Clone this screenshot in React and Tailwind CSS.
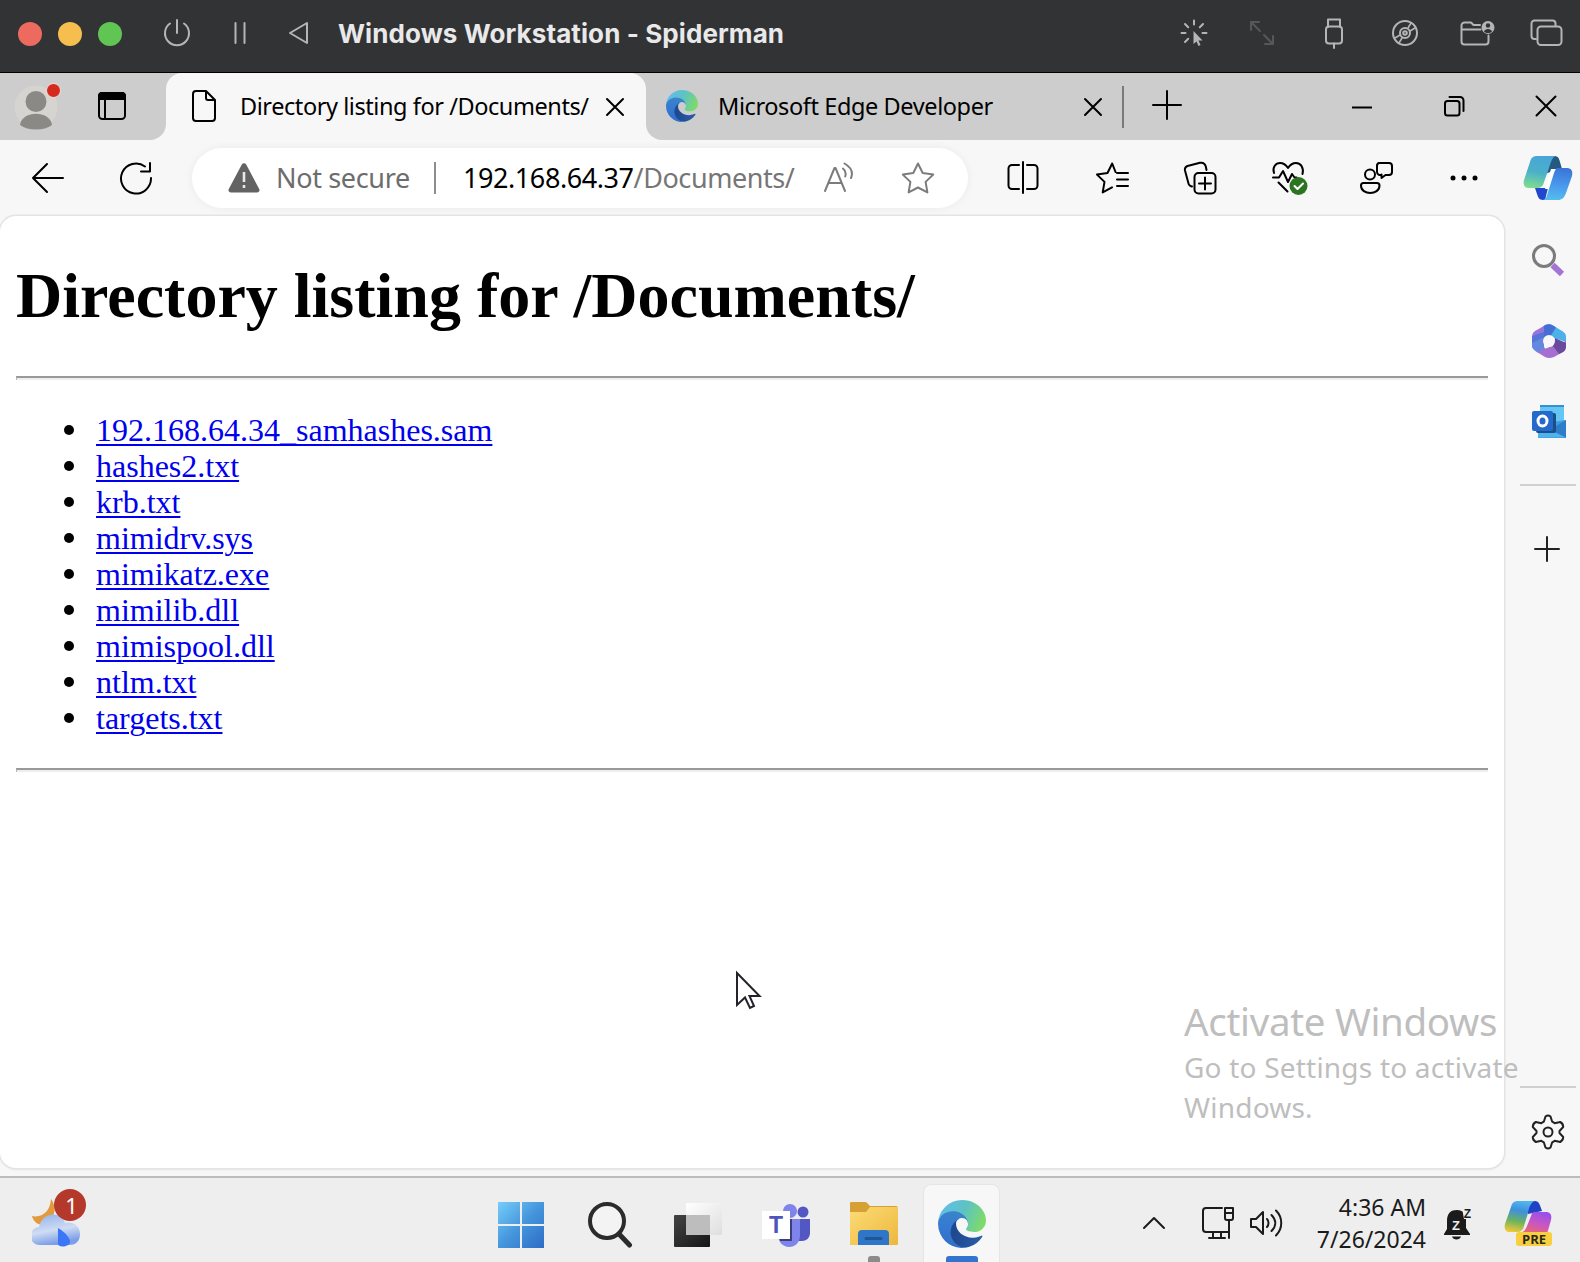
import React from "react";

function Svg({ w, h, className = "", children, sw = 2 }) {
  return (
    <svg
      width={w}
      height={h}
      viewBox={`0 0 ${w} ${h}`}
      fill="none"
      stroke="currentColor"
      strokeWidth={sw}
      strokeLinecap="round"
      strokeLinejoin="round"
      className={`shrink-0 ${className}`}
    >
      {children}
    </svg>
  );
}

function EdgeLogo({ size, id, className = "" }) {
  return (
    <svg width={size} height={size} viewBox="4.63 4.92 256 256" className={`shrink-0 ${className}`}>
      <defs>
        <linearGradient id={`${id}a`} x1="0.2" y1="0.5" x2="1" y2="0.6">
          <stop offset="0" stopColor="#1f4a91" />
          <stop offset="1" stopColor="#2b5ba8" />
        </linearGradient>
        <linearGradient id={`${id}b`} x1="0.5" y1="0" x2="0.4" y2="1">
          <stop offset="0" stopColor="#3a86c8" />
          <stop offset="0.5" stopColor="#3679d2" />
          <stop offset="1" stopColor="#2f6fc6" />
        </linearGradient>
        <linearGradient id={`${id}c`} x1="0" y1="0.3" x2="1" y2="0.6">
          <stop offset="0" stopColor="#62bdee" />
          <stop offset="0.5" stopColor="#5dc2c4" />
          <stop offset="1" stopColor="#7fdc66" />
        </linearGradient>
      </defs>
      <path fill={`url(#${id}a)`} d="M235.68 195.17a93.73 93.73 0 0 1-10.54 4.71 101.87 101.87 0 0 1-35.9 6.46c-47.32 0-88.54-32.55-88.54-74.32A31.48 31.48 0 0 1 117.13 104.57c-42.8 1.8-53.8 46.4-53.8 72.53 0 73.88 68.09 81.37 82.76 81.37 7.91 0 19.84-2.3 27-4.56l1.31-.44a128.34 128.34 0 0 0 66.6-52.8 4 4 0 0 0-5.32-5.5Z" />
      <path fill={`url(#${id}b)`} d="M110.34 246.34A79.2 79.2 0 0 1 87.6 225 80.72 80.72 0 0 1 117.13 104.57c3.12-1.47 8.45-4.13 15.54-4A32.35 32.35 0 0 1 158.35 113.57a31.88 31.88 0 0 1 6.36 18.66c0-.21 24.46-79.6-80-79.6-43.9 0-80 41.66-80 78.21a130.15 130.15 0 0 0 12.11 56 128 128 0 0 0 156.38 67.11 75.55 75.55 0 0 1-62.78-8Z" />
      <path fill={`url(#${id}c)`} d="M156.94 153.78c-.81 1.05-3.3 2.5-3.3 5.66 0 2.61 1.7 5.12 4.72 7.23 14.38 10 41.49 8.68 41.56 8.68A59.56 59.56 0 0 0 230.19 167a61.38 61.38 0 0 0 30.43-52.88c.26-22.41-8-37.31-11.34-43.91C228.09 28.76 182.35 4.92 132.61 4.92a128 128 0 0 0-128 126.2c.48-36.54 36.8-66.05 80-66.05 3.5 0 23.46.34 42 10.07 16.34 8.58 24.9 18.94 30.85 29.21 6.18 10.67 7.28 24.15 7.28 29.52S162 147.2 156.94 153.78Z" />
    </svg>
  );
}

function TitleBar() {
  return (
    <header className="flex h-[73px] shrink-0 items-center border-b border-black bg-[#323335] pb-[5px] pl-[18px] pr-[17px] text-[#b5b5b6]">
      <div className="flex gap-4">
        <div className="size-6 rounded-full bg-[#ed6a5f]" />
        <div className="size-6 rounded-full bg-[#f5be4f]" />
        <div className="size-6 rounded-full bg-[#61c554]" />
      </div>
      <Svg w={28} h={28} className="mb-[2px] ml-[41px]">
        <path d="M14 1v13M7 4.500a12 12 0 1 0 14 0" />
      </Svg>
      <Svg w={12} h={22} className="mb-[2px] ml-[43px]">
        <path d="M1.500 1v20M10.500 1v20" />
      </Svg>
      <Svg w={21} h={24} className="mb-px ml-[42px]">
        <path d="M19 2v20L2 12Z" />
      </Svg>
      <h1 className="ml-[29px] whitespace-nowrap font-['Inter'] text-[26px] font-bold leading-8 tracking-[0.09px] text-[#e9e9ea]">
        Windows Workstation - Spiderman
      </h1>
      <div className="mb-[2px] ml-auto flex items-center">
        <Svg w={28} h={28}>
          <path d="M14 1.500v4M5 5l3.200 3.200M23 5l-3.200 3.200M1.500 14h4M26.500 14h-4M5 23l3.200-3.200" />
          <path d="M13.500 12v13l3-2.600 2 4.600 2-1-2-4.400h4Z" fill="currentColor" stroke="none" />
        </Svg>
        <Svg w={26} h={26} className="ml-[41px] text-[#565759]">
          <path d="M2 10V2h8M2 2l9 9M15 15l9 9M16 24h8v-8" />
        </Svg>
        <Svg w={20} h={31} className="ml-[49px] mt-[2px]">
          <path d="M4 9V1.500h12V9M10 25.500V30" />
          <rect x="2" y="8.500" width="16" height="17" rx="3" />
        </Svg>
        <Svg w={28} h={28} className="ml-[47px]">
          <circle cx="14" cy="14" r="12" />
          <circle cx="14" cy="14" r="5" />
          <circle cx="14" cy="14" r="1.800" />
          <path d="M17 9l3-5M19 12l5-3M11 19l-3 5M9 16l-5 3" strokeWidth="1.600" />
        </Svg>
        <Svg w={35} h={26} className="ml-[41px]">
          <path d="M20 5h-6.500l-2.500-2.500H4.500A3 3 0 0 0 1.500 5.500v16a3 3 0 0 0 3 3h21a3 3 0 0 0 3-3V15.500M1.500 9.500h19" />
          <circle cx="28" cy="7.500" r="6.500" fill="currentColor" stroke="none" />
          <circle cx="28" cy="5.500" r="2.200" fill="#323335" stroke="none" />
          <path d="M24 11.500c1-3.500 7-3.500 8 0-2 2-6 2-8 0Z" fill="#323335" stroke="none" />
        </Svg>
        <Svg w={33} h={28} className="ml-[35px]">
          <path d="M6 20H4.500a3 3 0 0 1-3-3V4.500a3 3 0 0 1 3-3h18a3 3 0 0 1 3 3V7" />
          <rect x="7.500" y="7.500" width="24" height="18.500" rx="3.500" />
        </Svg>
      </div>
    </header>
  );
}

function TabStrip() {
  return (
    <div className="flex h-[67px] shrink-0 bg-[#f7f7f7] font-['Noto_Sans'] text-[23.5px] text-black">
      <div className="flex w-[166px] items-center rounded-br-[16px] bg-[#cdcdcd] pl-[14px]">
        <div className="relative size-[44px]">
          <svg width="44" height="46" viewBox="0 0 44 46">
            <circle cx="22" cy="22" r="21.500" fill="#d6d4d0" />
            <circle cx="22" cy="16.500" r="10.500" fill="#8b8986" />
            <path d="M6 40c2-15 30-15 32 0-8 6-24 6-32 0Z" fill="#8b8986" />
          </svg>
          <div className="absolute left-[32px] top-[-2px] size-[15px] rounded-full border-[1.5px] border-[#efe6e4] bg-[#d42a20]" />
        </div>
        <Svg w={30} h={30} className="mb-px ml-[39px]">
          <rect x="2" y="2" width="26" height="26" rx="3.500" />
          <path d="M2 8V5a3 3 0 0 1 3-3h20a3 3 0 0 1 3 3v3Z" fill="currentColor" />
          <path d="M8 8v20" />
        </Svg>
      </div>
      <div className="w-[480px] bg-[#cdcdcd]">
        <div className="flex h-full items-center rounded-t-[16px] bg-[#f7f7f7] pl-[25px]">
          <Svg w={26} h={34} className="mb-px">
            <path d="M5 2h10l9 9v18a3 3 0 0 1-3 3H5a3 3 0 0 1-3-3V5a3 3 0 0 1 3-3ZM15 2v7a2 2 0 0 0 2 2h7" />
          </Svg>
          <span className="mb-[2px] ml-[23px] w-[350px] whitespace-nowrap leading-8 tracking-[-0.43px]">
            Directory listing for /Documents/
          </span>
          <Svg w={20} h={20} className="ml-[15px]">
            <path d="M2 2l16 16M18 2L2 18" />
          </Svg>
        </div>
      </div>
      <div className="flex grow items-center rounded-bl-[16px] bg-[#cdcdcd] pl-[20px]">
        <EdgeLogo size={32} id="tab" className="mb-px" />
        <span className="mb-[2px] ml-[20px] w-[275px] whitespace-nowrap leading-8 tracking-[-0.4px]">
          Microsoft Edge Developer
        </span>
        <Svg w={20} h={20} className="ml-[90px]">
          <path d="M2 2l16 16M18 2L2 18" />
        </Svg>
        <div className="ml-[19px] h-[42px] w-[2px] bg-[#7a7a7a]" />
        <Svg w={30} h={30} className="mb-[3px] ml-[28px]">
          <path d="M15 1v28M1 15h28" />
        </Svg>
        <Svg w={20} h={20} className="ml-[170px]">
          <path d="M0 10.500h20" strokeLinecap="butt" />
        </Svg>
        <Svg w={22} h={22} className="mb-[2px] ml-[71px]">
          <rect x="2" y="6" width="14.500" height="14.500" rx="2.500" />
          <path d="M6.500 2H17a3.500 3.500 0 0 1 3.500 3.500V16" />
        </Svg>
        <Svg w={22} h={22} className="mb-[2px] ml-[70px]">
          <path d="M1.500 1.500l19 19M20.500 1.500l-19 19" />
        </Svg>
      </div>
    </div>
  );
}

function Toolbar() {
  return (
    <div className="flex h-[76px] shrink-0 items-center bg-[#f7f7f7] pl-[31px] text-black">
      <Svg w={34} h={32}>
        <path d="M2 16h30M16 2L2 16l14 14" />
      </Svg>
      <Svg w={34} h={34} className="ml-[54px]">
        <path d="M26 5.500A15 15 0 1 0 32 17M31 2v8.500h-9" />
      </Svg>
      <div className="ml-[39px] flex h-[60px] w-[776px] items-center rounded-full bg-white pl-[36px] font-['Noto_Sans'] text-[27px] shadow-[0_0_8px_rgba(0,0,0,0.06)]">
        <svg width="32" height="32" viewBox="0 0 32 32" className="shrink-0">
          <path d="M13.800 2.500a2.500 2.500 0 0 1 4.400 0l13 24.500a2.300 2.300 0 0 1-2 3.500H2.800a2.300 2.300 0 0 1-2-3.500Z" fill="#636363" />
          <path d="M14.700 10h2.600v10h-2.600ZM14.700 23h2.600v3h-2.600Z" fill="#e8e8e8" />
        </svg>
        <span className="ml-[16px] w-[135px] whitespace-nowrap leading-8 tracking-[-0.35px] text-[#6d6d6d]">Not secure</span>
        <div className="ml-[23px] h-[32px] w-[2px] bg-[#8d8d8d]" />
        <span className="ml-[27px] w-[332px] whitespace-nowrap leading-8 tracking-[-0.43px] text-[#767676]">
          <span className="text-black">192.168.64.37</span>/Documents/
        </span>
        <Svg w={32} h={32} className="ml-[28px] text-[#7c7c7c]">
          <path d="M2 29L11.500 6h1L22 29M5.500 21h13" />
          <path d="M20 6.500c2.500 2 3.200 5 2.200 8M21.500 1.500c6 3.500 9 8.500 6.500 14.500" />
        </Svg>
        <Svg w={34} h={34} className="ml-[46px] text-[#7c7c7c]">
          <path d="M17 2.500l4.700 9.500 10.500 1.600-7.600 7.300 1.800 10.500L17 26.500l-9.400 4.900 1.800-10.500L1.800 13.600 12.300 12Z" />
        </Svg>
      </div>
      <Svg w={32} h={34} className="ml-[39px]">
        <path d="M12 4H5a3.500 3.500 0 0 0-3.500 3.500v17A3.500 3.500 0 0 0 5 28h7M20 4h7a3.500 3.500 0 0 1 3.500 3.500v17A3.500 3.500 0 0 1 27 28h-7M16 1v31" />
      </Svg>
      <Svg w={34} h={34} className="ml-[56px]">
        <path d="M20.500 11L17.200 2.500 12.500 12 2 13.600l7.500 7.300-1.800 10.500 9.300-5M22 12h11M22 18.500h11M22 25h11" />
      </Svg>
      <Svg w={34} h={34} className="ml-[54px]">
        <path d="M9 25.500l-1.500-.5a4 4 0 0 1-2.200-3.200L2 9.500A4 4 0 0 1 4.500 5L17 1.800c3-.6 5 1 5.800 3.700L23.500 9" />
        <rect x="11.500" y="12" width="21" height="20.500" rx="4" />
        <path d="M22 16.500v12M16 22.500h12" />
      </Svg>
      <Svg w={38} h={36} className="ml-[54px]">
        <path d="M3 13C1 7 5 3 9 3c4 0 6 2 8 5 2-3 4-5 8-5 5 0 8 5 6.500 11M2 17.500h6l4-6.500 5 11 4-8 2.500 3.500h2M7.500 22.500l9 9" />
        <circle cx="27.500" cy="26" r="9" fill="#2c7421" stroke="none" />
        <path d="M23.500 26l3 3 5.500-5.500" stroke="#fff" />
      </Svg>
      <Svg w={34} h={34} className="ml-[50px]">
        <circle cx="11" cy="13.500" r="5" />
        <path d="M4 22h14a2.500 2.500 0 0 1 2.500 2.500c0 10-18.500 10-18.500 0A2.500 2.500 0 0 1 4 22ZM20 2h10a3 3 0 0 1 3 3v6a3 3 0 0 1-3 3h-3.500L22.500 17v-3.500A3 3 0 0 1 18 11V5a3 3 0 0 1 2-3Z" />
      </Svg>
      <svg width="30" height="8" viewBox="0 0 30 8" className="ml-[56px] shrink-0">
        <circle cx="4" cy="4" r="2.500" />
        <circle cx="15" cy="4" r="2.500" />
        <circle cx="26" cy="4" r="2.500" />
      </svg>
      <CopilotLogo />
    </div>
  );
}

function CopilotLogo() {
  return (
    <svg width="50" height="46" viewBox="0 0 50 46" className="ml-[44px] shrink-0">
      <defs>
        <linearGradient id="cpA" x1="0.5" y1="0" x2="0.3" y2="1">
          <stop offset="0" stopColor="#49a5d8" />
          <stop offset="0.5" stopColor="#4bb0c9" />
          <stop offset="1" stopColor="#7edc90" />
        </linearGradient>
        <linearGradient id="cpB" x1="0.5" y1="0" x2="0.4" y2="1">
          <stop offset="0" stopColor="#3b74d6" />
          <stop offset="0.6" stopColor="#4a9ef0" />
          <stop offset="1" stopColor="#55bdea" />
        </linearGradient>
      </defs>
      <path d="M26 1h5c4 0 5 2 6 6l2 7-9 2-8 3Z" fill="#255a80" />
      <path d="M12 33h13l-3 12h-2c-4 0-5-3-6-6Z" fill="#2346cf" />
      <path d="M28 14h7l-7 20h-6Z" fill="#fff" />
      <path d="M14 1h19c-4 1-5 6-7 12l-5 14c-1 4-3 6-7 6H6c-5 0-6-4-5-8L7 7c1-4 3-6 7-6Z" fill="url(#cpA)" />
      <path d="M35 13h9c5 0 6 4 5 8l-6 17c-2 5-4 7-8 7H20c3-1 4-4 5-8l6-19c1-3 2-5 4-5Z" fill="url(#cpB)" />
    </svg>
  );
}

const files = [
  "192.168.64.34_samhashes.sam",
  "hashes2.txt",
  "krb.txt",
  "mimidrv.sys",
  "mimikatz.exe",
  "mimilib.dll",
  "mimispool.dll",
  "ntlm.txt",
  "targets.txt",
];

function Rule({ className }) {
  return (
    <div className={`h-[4px] border-l border-t-2 border-l-[#b5b5b5] border-t-[#999] bg-[#eee] ${className}`} />
  );
}

function Page() {
  return (
    <main className="relative mb-[8px] w-[1504px] shrink-0 rounded-[16px] bg-white px-[16px] font-['Liberation_Serif'] text-black shadow-[0_0_0_1.5px_#e4e4e4,0_1px_3px_rgba(0,0,0,0.15)]">
      <h2 className="whitespace-nowrap pt-[43px] text-[64px] font-bold leading-[74px]">Directory listing for /Documents/</h2>
      <Rule className="mt-[43px]" />
      <ul className="mt-[32px]">
        {files.map((f) => (
          <li key={f} className="flex h-[36px] items-center pl-[48px] text-[32px] leading-[36px]">
            <span className="mr-[22px] size-[10px] rounded-full bg-black" />
            <a className="whitespace-nowrap text-[#0000ee] underline decoration-2 underline-offset-[3px]">{f}</a>
          </li>
        ))}
      </ul>
      <Rule className="mt-[32px]" />
      <svg width="28" height="42" viewBox="0 0 28 42" className="absolute left-[735px] top-[754px]">
        <path d="M2 3v32l8-7.500 5 10.500 4-2-4.500-10h10Z" fill="#fff" stroke="#23232b" strokeWidth="2" />
      </svg>
      <div className="absolute left-[1184px] top-[779px] whitespace-nowrap font-['Noto_Sans'] text-[#bebebe]">
        <p className="text-[38.5px] leading-[52px] tracking-[-0.31px]">Activate Windows</p>
        <p className="text-[28px] leading-[40px] tracking-[0.21px]">
          Go to Settings to activate
          <br />
          Windows.
        </p>
      </div>
    </main>
  );
}

function SideBar() {
  return (
    <aside className="flex grow flex-col items-center pl-[12px] text-[#222]">
      <Svg w={34} h={36} className="mr-px mt-[26px]">
        <circle cx="13" cy="14" r="10.500" stroke="#7b7b7b" strokeWidth="3" />
        <path d="M21.500 23l9.500 9" stroke="#a374d6" strokeWidth="6" strokeLinecap="butt" />
      </Svg>
      <svg width="34" height="34" viewBox="0 0 34 34" className="ml-px mt-[46px] shrink-0">
        <path d="M12 1.500q5-3 9 0l10 6q3 2 3 5v5.500L22 14l-10-2Z" fill="#4ab2e8" />
        <path d="M11 2.500q5-4 10-1l3 2-5 8-8 3Z" fill="#456fd4" />
        <path d="M0 13q0-4 3-6l8-4.500q1 0 1 2V13L0 19Z" fill="#9a74da" />
        <path d="M0 12l12-4v15l3 4-8 2q-5-2-7-6Z" fill="#4a74d8" opacity="0.85" />
        <path d="M5 28l10-4 19-7v5q0 4-3 6l-9 5q-5 2-9 0Z" fill="#a56fd2" />
        <path d="M23 14l11 5v3q0 4-3 6l-4 2-6-8Z" fill="#6a4a9c" />
        <circle cx="17" cy="17" r="6" fill="#f7f7f7" />
      </svg>
      <svg width="34" height="34" viewBox="0 0 34 34" className="ml-px mt-[46px] shrink-0">
        <path d="M8 1h24v17H8Z" fill="#64c6f2" />
        <path d="M8 1h24v2H8Z" fill="#3a8fd0" />
        <path d="M6 20l28-4v18H6Z" fill="#3f9be6" />
        <path d="M6 33L34 16v17.500Z" fill="#2f7cc9" />
        <path d="M6 20l28 13.500H6Z" fill="#4fb3ee" />
        <rect x="4" y="9" width="20" height="20" rx="2" fill="#1c4f86" />
        <rect x="0" y="7" width="21" height="20" rx="2" fill="#2469cc" />
        <ellipse cx="10.500" cy="17" rx="4.500" ry="5" stroke="#fff" strokeWidth="3" fill="none" />
      </svg>
      <div className="mt-[46px] h-[2px] w-[56px] bg-[#d0d0d0]" />
      <Svg w={26} h={26} className="mr-[2px] mt-[50px]">
        <path d="M13 1v24M1 13h24" />
      </Svg>
      <div className="mt-auto h-[2px] w-[56px] bg-[#d0d0d0]" />
      <Svg w={36} h={38} className="mb-[25px] mt-[25px]">
        <circle cx="18" cy="19" r="4.500" />
        <path d="M15.500 3.500q2.500-2 5 0l1.700 5.200 2.500 1.500 5.500-1.200q3 1.500 3 5l-3.700 4v2l3.700 4q0 3.500-3 5l-5.500-1.200-2.500 1.500-1.700 5.200q-2.500 2-5 0l-1.700-5.200-2.500-1.500L5.800 29q-3-1.500-3-5l3.700-4v-2l-3.700-4q0-3.500 3-5l5.500 1.200 2.500-1.500Z" />
      </Svg>
    </aside>
  );
}

function TaskBar() {
  return (
    <footer className="flex h-[86px] shrink-0 items-center border-t-2 border-[#bcbcbc] bg-[#eeeeee] pl-[32px] pt-[11px] text-[#1b1b1b]">
      <div className="relative mb-[6px] size-[48px]">
        <svg width="48" height="48" viewBox="0 0 48 48">
          <defs>
            <linearGradient id="cloud" x1="0" y1="0" x2="0.3" y2="1">
              <stop offset="0" stopColor="#8fb0ea" />
              <stop offset="0.6" stopColor="#cfdcf3" />
              <stop offset="1" stopColor="#7d9fe8" />
            </linearGradient>
          </defs>
          <path d="M19 0c6 8 5 20-7 25C6 27 1 22 0 17c10 2 18-4 19-17Z" fill="#e39a3d" />
          <path d="M8 46a9 9 0 0 1-1-18c3-16 23-16 26-4 9-2 15 4 15 11 0 8-5 11-11 11Z" fill="url(#cloud)" />
          <path d="M26 29c8 5 12 10 12 14 0 5-12 6-12 2Z" fill="#3a76f5" />
        </svg>
        <div className="absolute left-[22px] top-[-10px] flex size-[32px] items-center justify-center rounded-full bg-[#b5392b] pl-[3px] font-['Noto_Sans'] text-[22px] leading-none text-white">
          1
        </div>
      </div>
      <svg width="46" height="46" viewBox="0 0 46 46" className="mb-[2px] ml-[418px] shrink-0">
        <defs>
          <linearGradient id="win" gradientUnits="userSpaceOnUse" x1="0" y1="0" x2="46" y2="46">
            <stop offset="0" stopColor="#76cdfa" />
            <stop offset="0.5" stopColor="#4596dc" />
            <stop offset="1" stopColor="#2d6cc6" />
          </linearGradient>
        </defs>
        <path d="M0 0h22v22H0ZM24 0h22v22H24ZM0 24h22v22H0ZM24 24h22v22H24Z" fill="url(#win)" />
      </svg>
      <Svg w={46} h={46} sw={4} className="mb-[2px] ml-[43px] text-[#2b2b2b]">
        <circle cx="20" cy="19" r="17" fill="#f3f3f3" />
        <path d="M32 32l10.500 11" strokeWidth="5" />
      </Svg>
      <svg width="48" height="46" viewBox="0 0 48 46" className="mb-[2px] ml-[41px] shrink-0">
        <defs>
          <linearGradient id="tvw" x1="0" y1="0" x2="1" y2="1">
            <stop offset="0" stopColor="#fff" />
            <stop offset="1" stopColor="#dedede" />
          </linearGradient>
          <linearGradient id="tvd" x1="0" y1="0" x2="1" y2="1">
            <stop offset="0" stopColor="#444" />
            <stop offset="1" stopColor="#151515" />
          </linearGradient>
        </defs>
        <rect x="0" y="13" width="36" height="32" rx="1" fill="url(#tvd)" />
        <rect x="12" y="1" width="36" height="32" rx="1" fill="url(#tvw)" />
        <rect x="12" y="13" width="24" height="20" fill="#bdbdbd" />
      </svg>
      <svg width="48" height="46" viewBox="0 0 48 46" className="mb-[2px] ml-[40px] shrink-0 font-['Liberation_Sans']">
        <circle cx="28" cy="9" r="7" fill="#7f84ea" />
        <circle cx="41" cy="10" r="5.500" fill="#5257c4" />
        <path d="M35 17h13v14c0 5-4 8-8 8h-5Z" fill="#5257c4" />
        <path d="M16 17h22v16c0 8-5 12-11 12s-11-5-11-12Z" fill="#7f84ea" />
        <path d="M16 17h14v22H18Z" fill="#3c3f78" />
        <rect x="0" y="9" width="28" height="28" fill="#fff" />
        <text x="14" y="31" textAnchor="middle" fontSize="23" fontWeight="bold" fill="#4f55b8">T</text>
      </svg>
      <div className="ml-[40px] flex h-full shrink-0 flex-col items-center">
        <svg width="48" height="46" viewBox="0 0 48 46" className="mt-[12px]">
          <defs>
            <linearGradient id="fld" x1="0" y1="0" x2="1" y2="1">
              <stop offset="0" stopColor="#fbdc77" />
              <stop offset="1" stopColor="#eeb73c" />
            </linearGradient>
          </defs>
          <path d="M0 2q0-1 2-1h13q2 0 3 2l2 2h26q2 0 2 2v5H0Z" fill="#d6a035" />
          <path d="M0 11h16l4-5h28v37q0 1-1 1H0Z" fill="url(#fld)" />
          <path d="M8 44V33q0-4 4-4h23q4 0 4 4v11Z" fill="#2f76c8" />
          <path d="M16 37.500h15" stroke="#1f5794" strokeWidth="3" strokeLinecap="round" />
        </svg>
        <div className="mt-auto h-[6px] w-[12px] rounded-t-[3px] bg-[#8b8b8b]" />
      </div>
      <div className="ml-[25px] mt-[-5px] flex h-[78px] w-[77px] shrink-0 flex-col items-center rounded-t-[8px] border border-b-0 border-[#e6e6e6] bg-[#f7f7f7]">
        <EdgeLogo size={48} id="task" className="mt-[15px]" />
        <div className="mt-auto h-[6px] w-[32px] rounded-t-[3px] bg-[#3274cf]" />
      </div>
      <div className="mb-[5px] ml-auto flex items-center pr-[26px]">
        <Svg w={24} h={16}>
          <path d="M2 13L12 3l10 10" />
        </Svg>
        <Svg w={34} h={34} className="ml-[35px]">
          <path d="M21 2H5a3 3 0 0 0-3 3v18a3 3 0 0 0 3 3h22M12 26v5M20 26v5M8 32h16M28 15v17" />
          <path d="M24 2h8v10q0 2-2 2h-4q-2 0-2-2ZM24 7h8" />
        </Svg>
        <Svg w={34} h={32} className="ml-[14px]">
          <path d="M2 12v8h5l7 7V5l-7 7ZM18 12c2 2 2 6 0 8M22.500 8c5 5 5 11 0 16M27 3.500c7 7 7 18 0 25" />
        </Svg>
        <div className="ml-[33px] flex w-[110px] flex-col items-end whitespace-nowrap font-['Noto_Sans'] text-[23px] leading-[32px]">
          <span>4:36 AM</span>
          <span>7/26/2024</span>
        </div>
        <svg width="32" height="34" viewBox="0 -2 32 34" className="ml-[17px] shrink-0 font-['Liberation_Sans']">
          <path d="M4 13C4 5 8 2 14 2s9 4 9 10v8l4 6v1H1v-1l3-5ZM9 28.500h9c-1 4-8 4-9 0Z" fill="#1b1b1b" />
          <path d="M19 0h10v11h-8Z" fill="#eee" />
          <text x="13" y="21.500" textAnchor="middle" fontSize="13" fontWeight="bold" fill="#eee">Z</text>
          <text x="24.500" y="10" textAnchor="middle" fontSize="12" fontWeight="bold" fill="#1b1b1b">Z</text>
        </svg>
        <svg width="50" height="48" viewBox="0 0 50 48" className="ml-[29px] shrink-0 font-['Open_Sans']">
          <defs>
            <linearGradient id="preA" x1="0.5" y1="0" x2="0.3" y2="1">
              <stop offset="0" stopColor="#50b5ee" />
              <stop offset="0.3" stopColor="#3f8fdc" />
              <stop offset="0.65" stopColor="#6cb35f" />
              <stop offset="1" stopColor="#f0c938" />
            </linearGradient>
            <linearGradient id="preB" x1="0.7" y1="0" x2="0.3" y2="1">
              <stop offset="0" stopColor="#9a4fea" />
              <stop offset="0.5" stopColor="#c957c0" />
              <stop offset="1" stopColor="#f06a62" />
            </linearGradient>
          </defs>
          <path d="M24 2h7c4 0 5 4 7 10l-14 3Z" fill="#2142c4" />
          <path d="M14 2h17c-4 1-6 6-7 12l-4 13c-1 4-3 6-7 6H6c-5 0-6-4-5-8L7 8c1-4 3-6 7-6Z" fill="url(#preA)" />
          <path d="M31 13h11c5 0 6 4 5 8l-4 14H12c7-1 9-3 11-8l4-10q1-4 4-4Z" fill="url(#preB)" />
          <rect x="12" y="33" width="36" height="14" rx="3" fill="#f8cf3e" />
          <text x="30" y="44.500" textAnchor="middle" fontSize="13" fontWeight="bold" fill="#2a2a1a">PRE</text>
        </svg>
      </div>
    </footer>
  );
}

export default function App() {
  return (
    <div className="flex h-[1262px] w-[1580px] flex-col overflow-hidden bg-[#f7f7f7]">
      <TitleBar />
      <TabStrip />
      <Toolbar />
      <div className="flex min-h-0 grow">
        <Page />
        <SideBar />
      </div>
      <TaskBar />
    </div>
  );
}
